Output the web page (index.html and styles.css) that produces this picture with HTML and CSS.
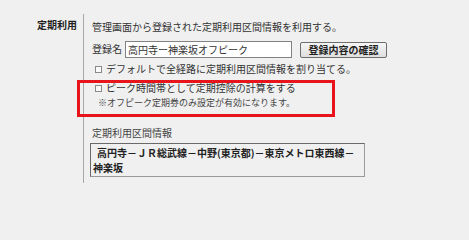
FILE: index.html
```html
<!DOCTYPE html>
<html lang="ja">
<head>
<meta charset="utf-8">
<link rel="stylesheet" href="styles.css">
</head>
<body>
<div class="setting">
  <div class="setting-label">定期利用</div>
  <div class="setting-body">
    <div class="line">管理画面から登録された定期利用区間情報を利用する。</div>
    <div class="reg-row">
      <span class="reg-label">登録名</span>
      <input class="reg-input" type="text" value="高円寺ー神楽坂オフピーク">
      <button class="reg-button" type="button">登録内容の確認</button>
    </div>
    <div class="line check-line"><span class="box"></span>デフォルトで全経路に定期利用区間情報を割り当てる。</div>
    <div class="highlight">
      <div class="line check-line"><span class="box"></span>ピーク時間帯として定期控除の計算をする</div>
      <div class="note">※オフピーク定期券のみ設定が有効になります。</div>
    </div>
    <div class="line section-title">定期利用区間情報</div>
    <div class="route">高円寺－ＪＲ総武線－中野(東京都)－東京メトロ東西線－神楽坂</div>
  </div>
</div>
</body>
</html>
```
FILE: styles.css
```css
html, body {
  margin: 0;
  padding: 0;
  background: #f0f0f0;
}
body {
  font-family: "Noto Sans CJK JP", "Noto Sans", sans-serif;
  font-size: 10px;
  color: #333;
  width: 469px;
  height: 205px;
  overflow: hidden;
}
.setting {
  display: flex;
  margin-top: 14px;
}
.setting-label {
  width: 83px;
  box-sizing: border-box;
  padding: 4px 6px 0 0;
  text-align: right;
  font-weight: bold;
  line-height: 14px;
  color: #222;
}
.setting-body {
  border-left: 1px solid #a8a8a8;
  padding: 6px 0 6px 8px;
  width: 300px;
}
.line {
  line-height: 14px;
  height: 14px;
  white-space: nowrap;
}
.reg-row {
  display: flex;
  align-items: center;
  height: 18px;
  margin-top: 6px;
}
.reg-label {
  line-height: 14px;
}
.reg-input {
  box-sizing: border-box;
  width: 167px;
  height: 17px;
  margin: 0 0 0 3px;
  padding: 0 2px;
  border: 1px solid #828282;
  background: #fff;
  font-family: inherit;
  font-size: 10px;
  color: #333;
  outline: none;
}
.reg-button {
  box-sizing: border-box;
  width: 87px;
  height: 16px;
  margin: 2px 0 0 8px;
  padding: 0;
  border: 1px solid #6e6e6e;
  border-radius: 2px;
  background: linear-gradient(#f6f6f6, #dedede);
  font-family: inherit;
  font-size: 10px;
  font-weight: bold;
  line-height: 14px;
  color: #222;
}
.check-line {
  margin-top: 4px;
  display: flex;
  align-items: center;
}
.box {
  display: inline-block;
  width: 5px;
  height: 5px;
  border: 1px solid #8a8a8a;
  background: #fafafa;
  margin: 0 4px 0 3px;
}
.highlight {
  position: relative;
  margin-top: 4px;
  padding: 1px 0 7px;
}
.highlight::before {
  content: "";
  position: absolute;
  left: -15px;
  top: 0;
  width: 258px;
  bottom: 0;
  box-sizing: border-box;
  border: 3px solid #e8141b;
  pointer-events: none;
}
.highlight .check-line {
  margin-top: 0;
}
.note {
  font-size: 9px;
  line-height: 15px;
  height: 15px;
  padding-left: 6px;
  color: #444;
  white-space: nowrap;
}
.section-title {
  margin-top: 9px;
  color: #444;
}
.route {
  box-sizing: border-box;
  width: 275px;
  margin: 3px 0 0 -2px;
  padding: 1px 2px;
  border: 1px solid #6a6a6a;
  border-right-color: #9a9a9a;
  border-bottom-color: #9a9a9a;
  font-weight: bold;
  line-height: 15px;
  color: #222;
  text-indent: 4px;
}
```
